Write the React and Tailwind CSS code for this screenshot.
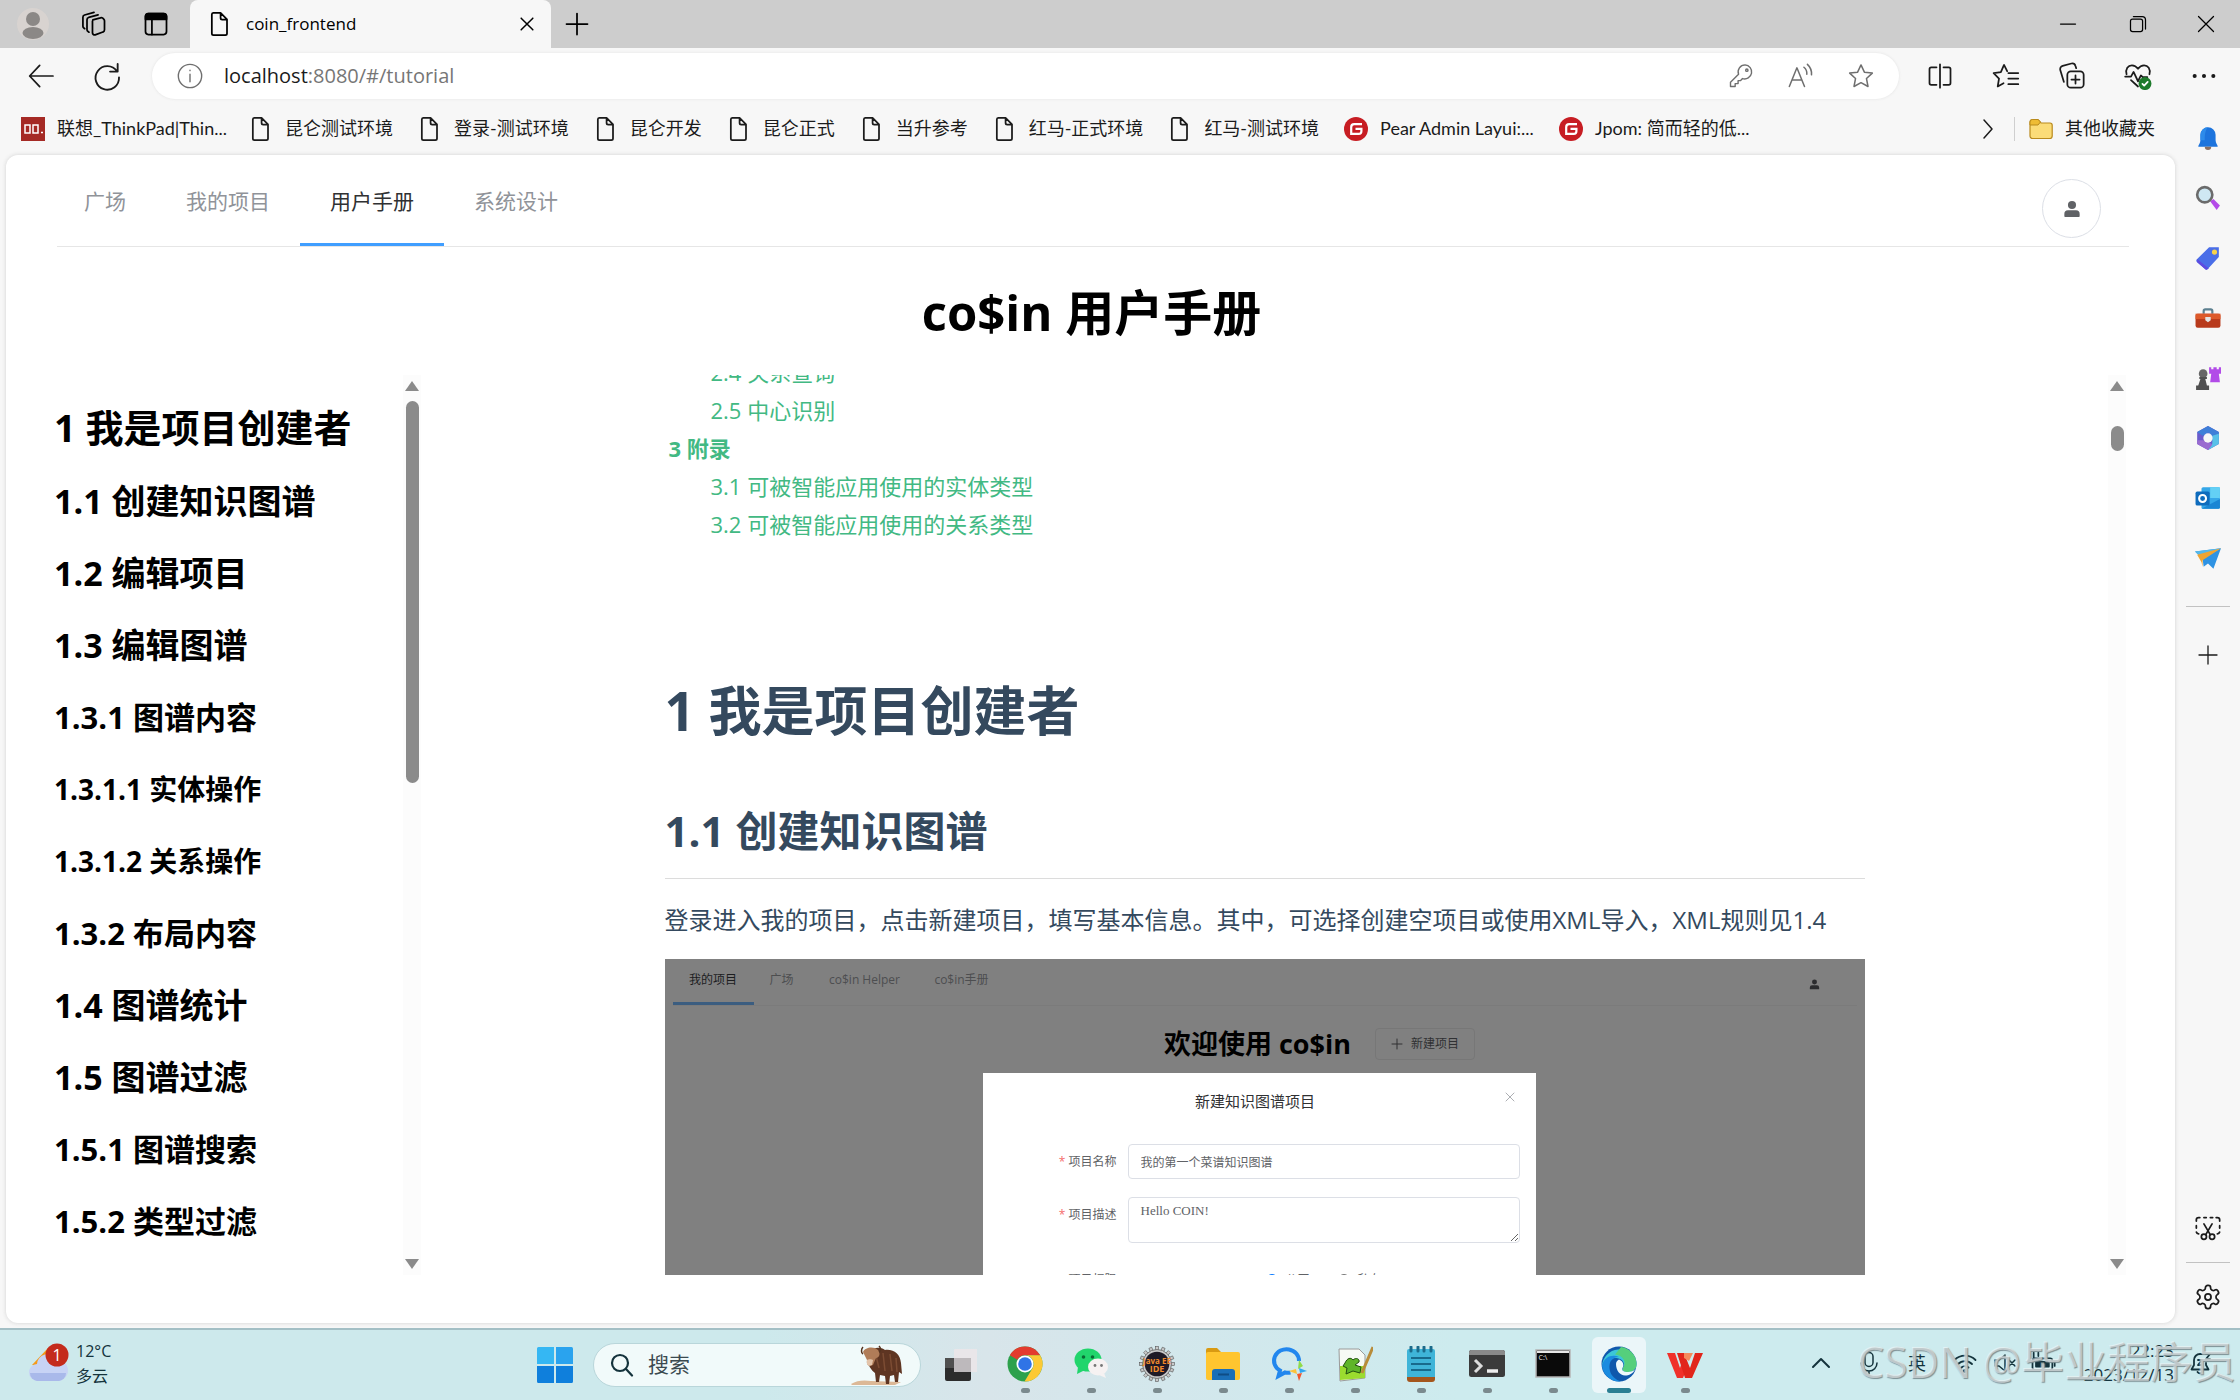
import React from "react";

const FONT = "font-['Open_Sans','Noto_Sans_CJK_SC',sans-serif]";

function Line({ children, className = "size-7", w = 1.5, vb = "0 0 24 24", fill = "none" }) {
  return (
    <svg viewBox={vb} className={className} fill={fill} stroke="currentColor" strokeWidth={w} strokeLinecap="round" strokeLinejoin="round" aria-hidden="true">
      {children}
    </svg>
  );
}

function Art({ children, className = "size-9", vb = "0 0 36 36" }) {
  return (
    <svg viewBox={vb} className={className} aria-hidden="true">
      {children}
    </svg>
  );
}

const FileIcon = () => (
  <Line className="size-7 shrink-0">
    <path d="M6.2 2.5h6.3l5.5 5.6v12a1.4 1.4 0 0 1-1.4 1.4H6.4A1.4 1.4 0 0 1 5 20.100V3.900A1.400 1.400 0 0 1 6.200 2.500ZM12.500 2.700V6.800a1.400 1.400 0 0 0 1.400 1.400h4" />
  </Line>
);

const GIcon = () => (
  <Art className="size-6 shrink-0" vb="0 0 24 24">
    <circle cx="12" cy="12" r="12" fill="#c71d23" />
    <path d="M18 7.200H10.200a3 3 0 0 0-3 3v6.600h7.600a2.600 2.600 0 0 0 2.600-2.600V11.800H11.500" fill="none" stroke="#fff" strokeWidth="2.200" />
  </Art>
);

const LenovoIcon = () => (
  <Art className="size-6 shrink-0" vb="0 0 24 24">
    <path fill="#a52a25" d="M0 0h24v24H0z" />
    <path d="M4 8h5v8H4zM12 8h5v8h-5zM20 15.500h2" fill="none" stroke="#fff" strokeWidth="1.500" />
  </Art>
);

const Person = ({ className }) => (
  <Art className={className} vb="0 0 20 20">
    <circle cx="10" cy="5.500" r="4.500" fill="currentColor" />
    <path d="M1.500 18v-2.500a4 4 0 0 1 4-4h9a4 4 0 0 1 4 4V18a.8.8 0 0 1-.8.8H2.300a.8.8 0 0 1-.8-.8Z" fill="currentColor" />
  </Art>
);

function IconButton({ label, className = "w-[66px]", children }) {
  return (
    <button type="button" aria-label={label} className={`flex shrink-0 items-center justify-center ${className}`}>
      {children}
    </button>
  );
}

function TitleBar() {
  return (
    <header className="flex h-12 items-stretch bg-[#cdcdcd] text-black">
      <IconButton label="个人资料" className="w-[66px]">
        <Art className="size-8" vb="0 0 32 32">
          <circle cx="16" cy="16" r="16" fill="#d8d3d0" />
          <circle cx="16" cy="11" r="7" fill="#8b8886" />
          <ellipse cx="16" cy="25" rx="10.500" ry="6" fill="#8b8886" />
        </Art>
      </IconButton>
      <IconButton label="工作区" className="w-14">
        <Line className="size-7">
          <path d="M11 8.500 17.500 6.700a2 2 0 0 1 2 .3l1 1a2 2 0 0 1 .5 1.300V17a2 2 0 0 1-1.400 1.900L13 21.300a1.800 1.800 0 0 1-2.300-1.700V9.500M7.700 19l-.8-.5A1.800 1.800 0 0 1 6 17V8.300a2 2 0 0 1 1.400-1.900l8.100-2.300M4 16l-.7-.5a1.800 1.800 0 0 1-.8-1.500V6.200a2 2 0 0 1 1.400-1.900L12 2" />
        </Line>
      </IconButton>
      <IconButton label="标签页操作" className="w-[68px]">
        <Line className="size-7">
          <rect x="3" y="3" width="18" height="18" rx="2.500" />
          <path d="M3 5.500A2.500 2.500 0 0 1 5.500 3h13A2.500 2.500 0 0 1 21 5.500V8H3Z" fill="currentColor" />
          <path d="M8.500 8v13" />
        </Line>
      </IconButton>
      <div className="flex w-[361px] items-center gap-3 rounded-t-lg bg-[#f7f7f7] pl-4 pr-2">
        <FileIcon />
        <span className="flex-1 text-[17px]">coin_frontend</span>
        <IconButton label="关闭标签页" className="w-8">
          <Line className="size-5" w={1.800}><path d="m5 5 14 14M19 5 5 19" /></Line>
        </IconButton>
      </div>
      <IconButton label="新建标签页" className="w-[52px]">
        <Line className="size-7"><path d="M12 3v18M3 12h18" /></Line>
      </IconButton>
      <div className="ml-auto flex">
        <IconButton label="最小化" className="w-[70px]"><Line className="size-5"><path d="M3 12h18" /></Line></IconButton>
        <IconButton label="还原" className="w-[69px]">
          <Line className="size-5"><rect x="3" y="6" width="14.500" height="15" rx="2.500" /><path d="M6.500 3H17a4 4 0 0 1 4 4v11" /></Line>
        </IconButton>
        <IconButton label="关闭" className="w-[68px]"><Line className="size-5"><path d="m3 3 18 18M21 3 3 21" /></Line></IconButton>
      </div>
    </header>
  );
}

function Toolbar() {
  return (
    <div className="flex h-14 items-center bg-[#f7f7f7] pl-2 pr-[3px] text-[#1b1b1b]">
      <IconButton label="返回"><Line className="size-8" w={1.300}><path d="M21 12H3.500M11 4l-7.500 8 7.500 8" /></Line></IconButton>
      <IconButton label="刷新">
        <Line className="size-8" w={1.400}><path d="M19.500 8.500A8.800 8.800 0 1 0 21 13M20 3v5.700h-5.700" /></Line>
      </IconButton>
      <div className="ml-3 flex h-[46px] flex-1 items-center rounded-full bg-white pl-6 text-[#6f6f6f] shadow-[0_0_3px_#e2e2e2]">
        <Line className="size-7 shrink-0" w={1.200}><circle cx="12" cy="12" r="10" /><path d="M12 10.500V17M12 7v.4" /></Line>
        <div className="relative ml-5 flex-1 text-[20px]">
          <input aria-label="地址" readOnly defaultValue="localhost:8080/#/tutorial" className="w-full bg-transparent text-[#767676] outline-none" />
          <span aria-hidden="true" className="pointer-events-none absolute left-0 top-0 bg-white text-[#1b1b1b]">localhost</span>
        </div>
        <IconButton label="密码" className="w-[60px]">
          <Line className="size-7" w={1.200}><path d="M15.500 2.500a6 6 0 0 0-5.600 8L3 17.300V21h4v-2.500h2.500V16h2l1.800-1.800A6 6 0 1 0 15.500 2.500Z" /><circle cx="17" cy="7" r="1" /></Line>
        </IconButton>
        <IconButton label="大声朗读" className="w-[60px]">
          <Line className="size-7" w={1.300}><path d="m2 21 6.500-16L15 21M4.500 15.500h8M14.500 4.500a7 7 0 0 1 2.500 6M17.500 2a11 11 0 0 1 3.500 9" /></Line>
        </IconButton>
        <IconButton label="收藏" className="mr-2 w-[60px]">
          <Line className="size-7" w={1.300}><path d="m12 2.500 2.900 6.200 6.800.8-5 4.700 1.300 6.800-6-3.300L6 21l1.300-6.800-5-4.700 6.800-.8Z" /></Line>
        </IconButton>
      </div>
      <div className="ml-2 flex">
        <IconButton label="拆分屏幕"><Line><path d="M12 2v20M9 4.500H4.500A1.500 1.500 0 0 0 3 6v12a1.500 1.500 0 0 0 1.500 1.500H9M15 4.500h4.500A1.500 1.500 0 0 1 21 6v12a1.500 1.500 0 0 1-1.500 1.500H15" /></Line></IconButton>
        <IconButton label="收藏夹"><Line><path d="M13 7.800 10.300 2.500 7.600 8.700l-6.200.8 4.600 4.700L4.900 21l5-2.800M14 9.500h8.500M14 14.200h8.500M14 19h8.500" /></Line></IconButton>
        <IconButton label="集锦"><Line><rect x="8" y="8" width="14" height="14" rx="3" /><path d="M15 11.500v7M11.500 15h7M5 17l-3-10a3 3 0 0 1 2-3.700l7.500-2A3 3 0 0 1 15 3.400l.6 1.900" /></Line></IconButton>
        <IconButton label="浏览器概要">
          <Line>
            <path d="M2.200 10.500C1 6 3.500 2.800 6.800 2.800c2.200 0 3.900 1.200 5.200 3 1.300-1.800 3-3 5.200-3 3.300 0 5.800 3.200 4.600 7.700M1 12.500h5l2.200-4 3.800 8 2.500-5 1.500 1.500h4M6 15.500l6 5.500" />
            <circle cx="18" cy="18.500" r="4.800" fill="#1e7b2c" stroke="#1e7b2c" />
            <path d="m15.800 18.700 1.500 1.500 3-3.200" stroke="#fff" />
          </Line>
        </IconButton>
        <IconButton label="更多"><Line fill="currentColor"><circle cx="4" cy="12" r="1" /><circle cx="12" cy="12" r="1" /><circle cx="20" cy="12" r="1" /></Line></IconButton>
      </div>
    </div>
  );
}

const bookmarks = [
  ["联想_ThinkPad|Thin...", LenovoIcon, "w-[167px]"],
  ["昆仑测试环境", FileIcon, ""],
  ["登录-测试环境", FileIcon, ""],
  ["昆仑开发", FileIcon, ""],
  ["昆仑正式", FileIcon, ""],
  ["当升参考", FileIcon, ""],
  ["红马-正式环境", FileIcon, ""],
  ["红马-测试环境", FileIcon, ""],
  ["Pear Admin Layui:...", GIcon, "w-[154px]"],
  ["Jpom: 简而轻的低...", GIcon, "w-[158px]"],
];

function Bookmarks() {
  return (
    <nav aria-label="收藏夹栏" className="flex h-[49px] shrink-0 items-center gap-[25px] whitespace-nowrap pl-[21px] pr-5 font-['Lato','Noto_Sans_CJK_SC',sans-serif] text-[18px] text-[#1b1b1b]">
      {bookmarks.map(([name, Icon, width]) => (
        <a key={name} href="#bookmark" className="flex items-center gap-3">
          <span className="flex w-6 justify-center"><Icon /></span>
          <span className={width}>{name}</span>
        </a>
      ))}
      <div className="ml-auto flex items-center">
        <IconButton label="更多收藏" className="w-[52px]"><Line className="size-6"><path d="m8 3 8 9-8 9" /></Line></IconButton>
        <span className="h-6 w-px bg-[#cfcfcf]" />
        <a href="#folder" className="ml-[14px] flex items-center gap-3">
          <Art className="size-6" vb="0 0 24 24">
            <path d="M1 5a2.500 2.500 0 0 1 2.500-2.500H9L12 6h9a2.200 2.200 0 0 1 2.200 2.200V19a2.500 2.500 0 0 1-2.500 2.500H3.500A2.500 2.500 0 0 1 1 19Z" fill="#fbdc78" stroke="#b98a1d" strokeWidth="1.200" />
            <path d="M1 8V5a2.500 2.500 0 0 1 2.500-2.500H9L11.500 5 9 8Z" fill="#eebc35" stroke="#b98a1d" strokeWidth="1" />
          </Art>
          其他收藏夹
        </a>
      </div>
    </nav>
  );
}

function ScrollBar({ children }) {
  return (
    <div aria-hidden="true" className="flex w-[18px] shrink-0 flex-col items-center bg-[#fcfcfc] py-[6px]">
      <svg viewBox="0 0 14 10" className="h-[10px] w-[14px] shrink-0"><path d="M7 0 14 10H0Z" fill="#8b8b8b" /></svg>
      <div className="flex w-full flex-1 flex-col items-center pt-[10px]">{children}</div>
      <svg viewBox="0 0 14 10" className="h-[10px] w-[14px] shrink-0"><path d="M0 0H14L7 10Z" fill="#8b8b8b" /></svg>
    </div>
  );
}

const outline = [
  ["1 我是项目创建者", "h-[76px] text-[38px]"],
  ["1.1 创建知识图谱", "h-[72px] text-[34px]"],
  ["1.2 编辑项目", "h-[72px] text-[34px]"],
  ["1.3 编辑图谱", "h-[72px] text-[34px]"],
  ["1.3.1 图谱内容", "h-[72px] text-[31px]"],
  ["1.3.1.1 实体操作", "h-[72px] text-[28px]"],
  ["1.3.1.2 关系操作", "h-[72px] text-[28px]"],
  ["1.3.2 布局内容", "h-[72px] text-[31px]"],
  ["1.4 图谱统计", "h-[72px] text-[34px]"],
  ["1.5 图谱过滤", "h-[72px] text-[34px]"],
  ["1.5.1 图谱搜索", "h-[72px] text-[31px]"],
  ["1.5.2 类型过滤", "h-[72px] text-[31px]"],
];

const toc = [
  ["2.4 关系查询", "pl-[46px]"],
  ["2.5 中心识别", "pl-[46px]"],
  ["3 附录", "pl-1 font-bold"],
  ["3.1 可被智能应用使用的实体类型", "pl-[46px]"],
  ["3.2 可被智能应用使用的关系类型", "pl-[46px]"],
];

function DialogShot() {
  return (
    <div className="mt-[19px] h-[330px] overflow-hidden bg-[#808080] text-[12px] leading-4">
      <div className="mx-2 flex h-[47px] items-stretch justify-between border-b border-[#7b7b7b] pr-[37px]">
        <div className="flex text-[#4d4e50]">
          <span className="flex w-[81px] items-center justify-center border-b-[3px] border-[#3b5d80] pb-[2px] text-[#1c1d1f]">我的项目</span>
          <span className="flex w-14 items-center justify-center pb-[5px]">广场</span>
          <span className="flex w-[110px] items-center justify-center pb-[5px]">co$in Helper</span>
          <span className="flex w-[84px] items-center justify-center pb-[5px]">co$in手册</span>
        </div>
        <span className="flex items-center pt-1 text-[#2b2c2e]"><Person className="size-[11px]" /></span>
      </div>
      <div className="flex h-[67px] items-center justify-center gap-6 pl-[110px] pt-2">
        <span className="text-[27px] font-bold leading-9 text-black">欢迎使用 co$in</span>
        <button type="button" className="flex h-8 w-[100px] items-center justify-center gap-2 rounded border border-[#777] text-[#303133]">
          <Line className="size-3" w={2}><path d="M12 2v20M2 12h20" /></Line>
          新建项目
        </button>
      </div>
      <form className="ml-[318px] w-[553px] bg-white pl-[70px] pr-4 pt-4 text-[#606266]">
        <div className="flex h-[55px] items-start">
          <span className="flex-1 pr-[46px] text-center text-[15px] leading-6 text-[#303133]">新建知识图谱项目</span>
          <button type="button" aria-label="关闭" className="pr-1 pt-[2px] text-[#909399]"><Line className="size-3"><path d="m4 4 16 16M20 4 4 20" /></Line></button>
        </div>
        <div className="flex h-[35px] items-center">
          <label htmlFor="pname" className="w-[75px] pr-[11px] text-right"><span className="text-[#f56c6c]">* </span>项目名称</label>
          <input id="pname" readOnly defaultValue="我的第一个菜谱知识图谱" className="h-full flex-1 rounded border border-[#dcdfe6] px-3 outline-none" />
        </div>
        <div className="mt-[18px] flex h-[46px]">
          <label htmlFor="pdesc" className="w-[75px] pr-[11px] pt-[10px] text-right"><span className="text-[#f56c6c]">* </span>项目描述</label>
          <textarea id="pdesc" readOnly defaultValue="Hello COIN!" className="h-full flex-1 rounded border border-[#dcdfe6] px-3 py-[5px] font-['Liberation_Serif',serif] text-[13px] outline-none" />
        </div>
        <div className="flex h-20 items-start pt-[29px]">
          <span className="w-[75px] pr-[11px] text-right">项目权限</span>
          <label className="ml-[138px] flex items-center gap-2"><input type="radio" name="scope" defaultChecked className="size-3" />公开</label>
          <label className="ml-7 flex items-center gap-2"><input type="radio" name="scope" className="size-3" />私有</label>
        </div>
      </form>
    </div>
  );
}

function Page() {
  return (
    <main className="mb-[5px] ml-[6px] mt-[2px] flex min-h-0 flex-1 flex-col rounded-xl bg-white pb-12 pl-12 pr-[46px] shadow-[0_0_4px_#d2d2d2]">
      <nav aria-label="主导航" className="ml-[3px] flex h-[92px] shrink-0 items-stretch border-b border-[#e6e6e6] text-[21px] text-[#909399]">
        <a href="#square" className="flex items-center pl-[27px] pr-[30px] pt-[2px]">广场</a>
        <a href="#mine" className="flex items-center px-[30px] pt-[2px]">我的项目</a>
        <a href="#manual" aria-current="page" className="flex items-center border-b-[3px] border-[#409eff] px-[30px] pt-[5px] text-[#303133]">用户手册</a>
        <a href="#design" className="flex items-center px-[30px] pt-[2px]">系统设计</a>
        <button type="button" aria-label="用户" className="ml-auto mr-7 mt-6 flex size-[59px] items-center justify-center rounded-full border border-[#dcdfe6] text-[#606266]">
          <Person className="size-[18px]" />
        </button>
      </nav>
      <h1 className="flex h-32 shrink-0 items-center justify-center pt-1 text-[49px] font-bold text-black">co$in 用户手册</h1>
      <div className="flex min-h-0 flex-1">
        <aside className="flex w-[367px] shrink-0">
          <ul className="flex-1 overflow-hidden pt-[14px] font-bold text-black">
            {outline.map(([text, style]) => (
              <li key={text} className={`flex items-center ${style}`}><a href="#section">{text}</a></li>
            ))}
          </ul>
          <ScrollBar><div className="h-[382px] w-[13px] rounded-full bg-[#8b8b8b]" /></ScrollBar>
        </aside>
        <section className="flex min-w-0 flex-1 pr-[3px]">
          <div className="min-w-0 flex-1 overflow-hidden">
            <article className="mx-auto -mt-[22px] max-w-[1200px] text-[#34495e]">
              <ul className="text-[22px] leading-[38px] text-[#42b983]">
                {toc.map(([text, style]) => (
                  <li key={text} className={style}><a href="#toc">{text}</a></li>
                ))}
              </ul>
              <h2 className="mt-[136px] text-[53px] font-bold leading-[64px]">1 我是项目创建者</h2>
              <h3 className="mt-[60px] border-b border-[#dcdcdc] pb-[19px] text-[42px] font-bold leading-[56px]">1.1 创建知识图谱</h3>
              <p className="mt-[21px] whitespace-nowrap text-[24px] leading-10">登录进入我的项目，点击新建项目，填写基本信息。其中，可选择创建空项目或使用XML导入，XML规则见1.4</p>
              <DialogShot />
            </article>
          </div>
          <ScrollBar><div className="mt-[25px] h-[25px] w-[13px] rounded-full bg-[#8b8b8b]" /></ScrollBar>
        </section>
      </div>
    </main>
  );
}

const sideApps = [
  ["通知", <><path d="M3 20c0-2 2-3 2-6V9a7 7 0 0 1 14 0v5c0 3 2 4 2 6Z" fill="#1d74dd" /><path d="M5 14V9a7 7 0 0 1 7-7c-3 3-3 8-3 12Z" fill="#2d8bea" /><path d="M9 20h6a3 3 0 0 1-6 0Z" fill="#8a6f63" /></>],
  ["搜索", <><path d="m14 15 3-2 6 6-3 4Z" fill="#b44be8" /><circle cx="9" cy="9" r="7" fill="#cfe8f3" stroke="#6b6b6b" strokeWidth="2.400" /></>],
  ["购物", <><path d="M13 2h9v9L12 22a2 2 0 0 1-3 0l-7-6a2 2 0 0 1 0-3Z" fill="#4a6ee8" /><path d="m2 13 11 9-1 0a2 2 0 0 1-3 0l-7-6Z" fill="#5d4ae0" /><circle cx="18" cy="6.500" r="2.400" fill="#f7d24a" /></>],
  ["工具", <><path d="M8 8V5.500A1.500 1.500 0 0 1 9.500 4h5A1.500 1.500 0 0 1 16 5.500V8" fill="none" stroke="#5d8090" strokeWidth="2" /><rect x="0.500" y="8" width="23" height="13" rx="2" fill="#b83a1c" /><path d="M.5 8h23v5H.5Z" fill="#dd5a2b" /><path d="M9.500 11h5v3l-2.500 2-2.500-2Z" fill="#e4e4e4" /></>],
  ["游戏", <><path d="M13 2h2v2h2V2h3v2h2V2h2v6h-2l1 8h-9l1-8h-2Z" fill="#b24be8" /><circle cx="7.500" cy="8" r="4" fill="#666" /><path d="M4 11h7v2H9.500l1.500 6h2v4H1v-4h2l2-6H4Z" fill="#505050" /></>],
  ["Microsoft 365", <><path d="M12 1 22 6.500v11L12 23 2 17.500v-11Z" fill="#6a5ccc" /><path d="M12 1 22 6.500V13l-7 1-2-7-6 3-5-3.500Z" fill="#3f7fd8" /><path d="m22 8-6 2v7l-4 6 10-5.500Z" fill="#58c1e8" /><path d="M2 14l8 0 6 4-4 5L2 17.500Z" fill="#9a6bd0" /><circle cx="12" cy="12" r="4.300" fill="#f7f7f7" /></>],
  ["Outlook", <><rect x="6" y="2" width="17" height="20" rx="1.500" fill="#35a7e8" /><path d="M14 2h9v10h-9Z" fill="#63d0f5" /><path d="m6 22 17-9v7.500a1.500 1.500 0 0 1-1.500 1.500Z" fill="#1b86d4" /><rect x="0.500" y="6" width="13" height="13" rx="1.500" fill="#0f6cbd" /><circle cx="7" cy="12.500" r="3.200" fill="none" stroke="#fff" strokeWidth="1.900" /></>],
  ["Drop", <><path d="m0 6 24-3-7 19-5-5-4 3-1-7Z" fill="#2f93e3" /><path d="M0 6 24 3 7 13Z" fill="#55b8ea" /><path d="M2 9 24 3 7 14v6l-1-4Z" fill="#f0a431" /></>],
];

function EdgeSidebar() {
  return (
    <aside className="flex w-[65px] shrink-0 flex-col items-center text-[#1b1b1b]">
      <div className="flex flex-col items-center pt-1">
        {sideApps.map(([name, art]) => (
          <IconButton key={name} label={name} className="h-[60px] w-[65px]"><Art className="size-[26px]" vb="0 0 24 24">{art}</Art></IconButton>
        ))}
      </div>
      <hr className="mt-[18px] w-11 border-[#c2c2c2]" />
      <IconButton label="自定义" className="mt-6 h-12 w-[65px]"><Line className="size-6" w={1.300}><path d="M12 3v18M3 12h18" /></Line></IconButton>
      <IconButton label="屏幕截图" className="mb-[10px] mt-auto h-12 w-[65px]">
        <Line w={1.500}>
          <path d="M2 6V5a2 2 0 0 1 2-2h1M8.500 3h2M14 3h2M19 3h1a2 2 0 0 1 2 2v1M22 10v2M2 10v2M2 15.500a2 2 0 0 0 2 1.500M22 15.500a2 2 0 0 1-2 1.500M8.500 8.500l5.300 9M15.500 8.500l-5.300 9" />
          <circle cx="8.500" cy="19.500" r="2.200" /><circle cx="15.500" cy="19.500" r="2.200" />
        </Line>
      </IconButton>
      <hr className="w-11 border-[#c2c2c2]" />
      <IconButton label="设置" className="mb-[5px] mt-2 h-[52px] w-[65px]">
        <Line w={1.500}>
          <path d="M12.220 2h-.44a2 2 0 0 0-2 2v.18a2 2 0 0 1-1 1.730l-.43.25a2 2 0 0 1-2 0l-.15-.08a2 2 0 0 0-2.730.73l-.22.38a2 2 0 0 0 .73 2.730l.15.1a2 2 0 0 1 1 1.720v.51a2 2 0 0 1-1 1.740l-.15.09a2 2 0 0 0-.73 2.730l.22.38a2 2 0 0 0 2.730.73l.15-.08a2 2 0 0 1 2 0l.43.25a2 2 0 0 1 1 1.730V20a2 2 0 0 0 2 2h.44a2 2 0 0 0 2-2v-.18a2 2 0 0 1 1-1.730l.43-.25a2 2 0 0 1 2 0l.15.08a2 2 0 0 0 2.730-.73l.22-.39a2 2 0 0 0-.73-2.730l-.15-.08a2 2 0 0 1-1-1.740v-.5a2 2 0 0 1 1-1.740l.15-.09a2 2 0 0 0 .73-2.730l-.22-.38a2 2 0 0 0-2.730-.73l-.15.08a2 2 0 0 1-2 0l-.43-.25a2 2 0 0 1-1-1.730V4a2 2 0 0 0-2-2z" />
          <circle cx="12" cy="12" r="2.600" />
        </Line>
      </IconButton>
    </aside>
  );
}

const gearTeeth = Array.from({ length: 16 }, (_, i) => i * 22.5);

const taskApps = [
  ["任务视图", "none", <><rect x="4" y="12" width="26" height="23" rx="2" fill="#2c2c2c" /><path d="M4 12h26v10H4Z" fill="#505050" /><rect x="13" y="3" width="24" height="23" rx="1" fill="#e9e6e9" /><path d="M13 12h17v14H13Z" fill="#bdb9bc" /></>],
  ["Chrome", "dot", <><circle cx="18" cy="18" r="17.500" fill="#2da14c" /><path d="M18 .5A17.500 17.500 0 0 1 33.200 9.300H18a8.700 8.700 0 0 0-7.600 4.400L2.900 9.200A17.500 17.500 0 0 1 18 .5Z" fill="#e33b2e" /><path d="M33.200 9.300A17.500 17.500 0 0 1 17.500 35.500l8-13.200A8.700 8.700 0 0 0 18 9.300Z" fill="#fcc934" /><circle cx="18" cy="18" r="8.500" fill="#fff" /><circle cx="18" cy="18" r="6.800" fill="#2f74e6" /></>],
  ["微信", "dot", <><ellipse cx="15" cy="14" rx="13.500" ry="11.500" fill="#21d56c" /><path d="m5 21-1 7 8-4Z" fill="#21d56c" /><circle cx="10.500" cy="11" r="1.800" fill="#0a6b34" /><circle cx="19.500" cy="11" r="1.800" fill="#0a6b34" /><ellipse cx="25" cy="21" rx="10" ry="8.500" fill="#f6f2f2" /><path d="m31 27 2 5-7-3Z" fill="#f6f2f2" /><circle cx="22" cy="19.500" r="1.400" fill="#777" /><circle cx="28.500" cy="19.500" r="1.400" fill="#777" /></>],
  ["Java EE IDE", "dot", <>{gearTeeth.map((a) => <rect key={a} x="16.500" y="0.500" width="3" height="6" fill="#c9c9c9" stroke="#555" strokeWidth=".6" transform={`rotate(${a} 18 18)`} />)}<circle cx="18" cy="18" r="14.500" fill="#c9c9c9" stroke="#666" strokeWidth=".8" /><circle cx="18" cy="18" r="12.300" fill="#1f1a26" /><text x="18" y="17.500" textAnchor="middle" fontSize="8" fontWeight="700" fill="#f08a2c">Java EE</text><text x="18" y="26" textAnchor="middle" fontSize="9" fontWeight="700" fill="#f08a2c">IDE</text></>],
  ["文件资源管理器", "dot", <><path d="M1 4a2 2 0 0 1 2-2h9l4 4h16v8H1Z" fill="#d99a12" /><rect x="1" y="6" width="34" height="28" rx="2" fill="#ffc52f" /><path d="M7 34v-8a3 3 0 0 1 3-3h17a3 3 0 0 1 3 3v8Z" fill="#1a6fb8" /><path d="M13 28.500h11" stroke="#0f4d85" strokeWidth="2" /></>],
  ["企业微信", "dot", <><path d="M28 15A12.500 11.500 0 1 0 9 24.500L7.500 30l6.500-3.500c2 .5 4 .4 5.500.1" fill="none" stroke="#2287ee" strokeWidth="4" /><path d="m28 14 4 6-5 3Z" fill="#8fdb4a" /><path d="m36 25-7 2-1-5Z" fill="#2fa7f0" /><path d="m28 35-2-7 5-1Z" fill="#f0562c" /><path d="m18 25 7-2 1 5Z" fill="#fbc23a" /></>],
  ["Notepad++", "dot", <><path d="M2 3h20l6 6v23L3 35Z" fill="#f7faf4" stroke="#9a9a9a" /><path d="M3 20h25v12L3 34Z" fill="#9bdc2f" /><path d="M8 17c2-5 6-6 8-3 3-3 7-1 6 2l-4 3 6 2-1 6-7-2-7 3 1-6-4-2Z" fill="#5fb529" stroke="#234f10" /><path d="m36 1-9 21-2 5" fill="none" stroke="#b88c3a" strokeWidth="3" /></>],
  ["记事本", "dot", <><rect x="4" y="3" width="28" height="30" rx="2" fill="#3fb4d8" /><path d="M4 31h28v2a3 3 0 0 1-3 3H7a3 3 0 0 1-3-3Z" fill="#a4561d" /><path d="M8 12h20M8 18h20M8 24h20" stroke="#186a8c" strokeWidth="2" /><path d="M8 1v4M15 1v4M21 1v4M28 1v4" stroke="#1b6a8a" strokeWidth="3" strokeLinecap="round" /></>],
  ["终端", "dot", <><rect x="0" y="4" width="36" height="27" rx="2.500" fill="#3b3b3b" /><path d="M0 9V6.500A2.500 2.500 0 0 1 2.500 4h31A2.500 2.500 0 0 1 36 6.500V9Z" fill="#8a8a8a" /><path d="m6 14 6 6-6 6" fill="none" stroke="#ddd" strokeWidth="3" /><path d="M18 25h11" stroke="#eee" strokeWidth="3.500" /></>],
  ["命令提示符", "dot", <><rect x="1" y="4" width="34" height="27" fill="#0a0a0a" stroke="#b5b5b5" strokeWidth="1.500" /><path d="M2 5h32v2H2Z" fill="#e6e6e6" /><text x="3.500" y="14" fontSize="7" fill="#eee">C:\</text></>],
  ["Edge", "active", <><circle cx="18" cy="18" r="17.500" fill="#0f58ac" /><path d="M1 20A17.500 17.500 0 0 1 35.500 17c.5 6-4 9-8.500 9-4 0-6.500-1.500-5-4 2.500-4 0-9.500-6.500-10C8 11.500 3 15 1 20Z" fill="#3cc6d8" /><path d="M20 1a17.500 17.500 0 0 1 15.500 16c.5 6-4 9-8.500 9-4 0-6.500-1.500-5-4 4-6 0-13-8-13.500Z" fill="#55cf7c" /><path d="M1 20C3 10 12 8 18 11c-8 0-11 7-9 14 1 5 6 9 11 10.400A17.500 17.500 0 0 1 1 20Z" fill="#1a8be0" /><path d="M15 18c0-2 1.500-4 3-4.500 4 1.500 5.500 5.500 3.500 8.500-1 2 .5 4 5.500 4 3 0 5.500-1 7-2.500-2 4-6 6-10 6-5 0-9-5-9-11.500Z" fill="#eef9fb" /></>],
  ["WPS", "dot", <><path d="M0 7h8l5 15 3-9 5 6-5 13h-6Z" fill="#f0302a" /><path d="M36 7h-8l-5 15-6-15h-7l8 25h7Z" fill="#e1251b" /><path d="M17 7h9l-4 8-5-3Z" fill="#f58a5c" /></>],
];

function Taskbar() {
  return (
    <footer className="relative grid h-[72px] shrink-0 grid-cols-[1fr_auto_1fr] items-stretch border-t-2 border-[#a3bfc5] bg-[linear-gradient(90deg,#cde9ec_0%,#cde9ec_34%,#d8e5ea_44%,#d3e7ec_52%,#cdebee_65%,#cdebee_100%)] text-[#14333c]">
      <button type="button" className="flex items-center gap-[6px] pl-7 pb-[2px] text-left text-[16px] leading-[25px]">
        <Art className="size-[42px]" vb="0 0 42 42">
          <path d="M20 5 4 22l14 2Z" fill="#f59a1a" />
          <path d="M10 38a8.500 8.500 0 0 1-1-17 10 10 0 0 1 19-4 10 10 0 0 1 3 21Z" fill="#c7d3f5" />
          <path d="M9 38a8 8 0 0 1-7-8h36a8 8 0 0 1-7 8Z" fill="#a9b9ea" />
          <circle cx="29" cy="12" r="11.500" fill="#c42b1c" />
          <text x="29" y="18" textAnchor="middle" fontSize="16" fill="#fff">1</text>
        </Art>
        <span>12°C<br />多云</span>
      </button>
      <div className="flex items-center">
        <IconButton label="开始">
          <Art>
            <path d="M0 1.500A1.500 1.500 0 0 1 1.500 0H17v17H0Z" fill="#35b7f3" /><path d="M19 0h15.500A1.500 1.500 0 0 1 36 1.500V17H19Z" fill="#2aa3ee" />
            <path d="M0 19h17v17H1.500A1.500 1.500 0 0 1 0 34.500ZM19 19h17v15.500a1.500 1.500 0 0 1-1.500 1.500H19Z" fill="#0f7fdc" />
          </Art>
        </IconButton>
        <label className="mx-[5px] flex h-11 w-[328px] items-center gap-[14px] rounded-full border border-[#b9d6da] bg-[#f1fafa] pl-4 pr-[14px]">
          <Line className="size-6 shrink-0" w={2.200}><circle cx="10" cy="10" r="8" /><path d="m16 16 6 6.500" /></Line>
          <input type="search" placeholder="搜索" aria-label="搜索" className="min-w-0 flex-1 bg-transparent text-[21px] outline-none placeholder:text-[#3b4a50]" />
          <Art className="h-[42px] w-[56px] shrink-0" vb="0 0 56 42">
            <path d="M1 40c6-4 14-4 20-3l30 1-6 3H2Z" fill="#dcb896" />
            <path d="M20 7c4-4 11-4 15-1 9-1 15 4 16 13l1 11-3-2-1 10h-3l-1-7-4 1-1 8h-3l-1-8-5-1-1 7h-3l-1-9c-4-3-7-8-8-14Z" fill="#5e3522" />
            <path d="m26 12 3 12M33 9l2 18M40 10l2 17M46 14l1 14" fill="none" stroke="#7c4c33" strokeWidth="1.500" />
            <path d="M13 8c2-5 11-6 15-2 3 4 1 8-2 8l-3 7c-4 2-7 0-6-5Z" fill="#b07c58" />
            <path d="M17 16c1-1 5-1 6 0l-1 5c-2 1-4 1-5-1Z" fill="#e3c4aa" />
            <path d="M13 10c-2-1-2-5 0-7M29 8c2-1 2-4 0-6" fill="none" stroke="#53331f" strokeWidth="1.500" />
          </Art>
        </label>
        {taskApps.map(([name, state, art]) => (
          <button key={name} type="button" aria-label={name} className="flex h-full w-[66px] items-center justify-center">
            <span className={`flex h-14 w-[54px] flex-col items-center justify-between rounded-md pt-[9px] ${state === "active" ? "bg-[#ebf6f9]" : ""}`}>
              <Art>{art}</Art>
              {state === "dot" && <span className="h-[5px] w-[9px] rounded-full bg-[#7b8a8e]" />}
              {state === "active" && <span className="h-[5px] w-6 rounded-full bg-[#2a7f93]" />}
            </span>
          </button>
        ))}
      </div>
      <div className="flex items-center justify-end pb-1 pr-[26px]">
        <IconButton label="显示隐藏的图标" className="w-12"><Line className="size-6" w={2}><path d="m4 16 8-8 8 8" /></Line></IconButton>
        <IconButton label="麦克风" className="w-12"><Line className="size-6"><rect x="8" y="1.500" width="8" height="14" rx="4" /><path d="M4 12a8 8 0 0 0 16 0M12 20v3" /></Line></IconButton>
        <IconButton label="输入法" className="w-12 text-[18px]">英</IconButton>
        <IconButton label="网络" className="w-12"><Line className="size-6" w={1.800}><path d="M1.500 9a15 15 0 0 1 21 0M5 13a10 10 0 0 1 14 0M8.500 16.500a5 5 0 0 1 7 0" /><circle cx="12" cy="20" r="1.200" fill="currentColor" /></Line></IconButton>
        <IconButton label="音量" className="w-8"><Line className="size-6"><path d="M2 9h4l6-5v16l-6-5H2ZM16 9l6 6M22 9l-6 6" /></Line></IconButton>
        <IconButton label="电池" className="w-11"><Line className="size-7"><rect x="3" y="8" width="17" height="10" rx="2" /><path d="M6 11h11v4H6Z" fill="currentColor" /><path d="M22 11.500v3M4 3v6M8 3v3" /></Line></IconButton>
        <div className="w-[109px] text-right text-[17px] leading-6">22:23<br />2023/12/13</div>
        <IconButton label="通知中心" className="ml-3 w-7"><Line className="size-6" w={1.800}><path d="M14 3H12a6 6 0 0 0-6 6v5l-2.500 4.500h17L18 14v-2M9.500 21a3 3 0 0 0 5 0M10 9h4l-4 5h4M18 3h4l-4 5h4" /></Line></IconButton>
      </div>
      <span className="pointer-events-none absolute bottom-2 right-1 whitespace-nowrap text-[43px] leading-[60px] text-white/50 [text-shadow:1px_1px_1px_#7d8f93]">CSDN @毕业程序员</span>
    </footer>
  );
}

export default function App() {
  return (
    <div className={`flex h-screen flex-col overflow-hidden bg-[#f7f7f7] ${FONT}`}>
      <TitleBar />
      <Toolbar />
      <div className="flex min-h-0 flex-1">
        <div className="flex min-w-0 flex-1 flex-col">
          <Bookmarks />
          <Page />
        </div>
        <EdgeSidebar />
      </div>
      <Taskbar />
    </div>
  );
}
